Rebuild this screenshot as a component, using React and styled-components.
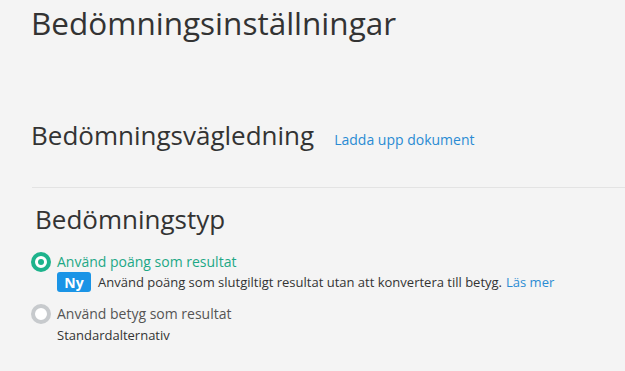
import React from "react";
import styled, { createGlobalStyle } from "styled-components";

const GlobalStyle = createGlobalStyle`
  html, body {
    margin: 0;
    padding: 0;
    background: #f4f4f4;
  }
  body {
    font-family: "Open Sans", "Liberation Sans", sans-serif;
    color: #333;
  }
`;

const Page = styled.div`
  min-height: 371px;
  padding: 7px 0 0 31px;
  background: #f4f4f4;
  overflow: hidden;
`;

const Title = styled.h1`
  margin: 0;
  font-size: 31.5px;
  line-height: 32px;
  font-weight: 400;
  color: #333;
  white-space: nowrap;
`;

const Section = styled.section`
  margin-top: ${(p) => p.$top}px;
  padding-left: ${(p) => p.$indent || 0}px;
`;

const HeadRow = styled.div`
  display: flex;
  align-items: baseline;
  gap: 20px;
`;

const Heading = styled.h2`
  margin: 0;
  font-size: 26px;
  line-height: 1;
  font-weight: 400;
  color: #333;
  white-space: nowrap;
`;

const Link = styled.a`
  font-size: 14px;
  color: #2a8bd3;
  text-decoration: none;
  cursor: pointer;
  white-space: nowrap;
`;

const Divider = styled.hr`
  margin: 38px 0 0 1px;
  border: 0;
  border-top: 1px solid #e3e3e3;
`;

const Options = styled.div`
  margin-top: 20px;
  margin-left: -4px;
  display: flex;
  flex-direction: column;
  gap: 12px;
`;

const Option = styled.label`
  display: grid;
  grid-template-columns: 20px 1fr;
  column-gap: 6px;
  cursor: pointer;
`;

const Radio = styled.span`
  box-sizing: border-box;
  width: 20px;
  height: 20px;
  border-radius: 50%;
  border: 4px solid ${(p) => (p.$checked ? "#1db38c" : "#c7cacd")};
  background: #fff;
  display: flex;
  align-items: center;
  justify-content: center;

  &::after {
    content: "";
    width: 6px;
    height: 6px;
    border-radius: 50%;
    background: ${(p) => (p.$checked ? "#1db38c" : "transparent")};
  }
`;

const Label = styled.span`
  font-size: 14px;
  line-height: 20px;
  color: ${(p) => (p.$checked ? "#1da886" : "#555")};
  white-space: nowrap;
`;

const Detail = styled.div`
  grid-column: 2;
  display: flex;
  align-items: center;
  gap: 7px;
  min-height: ${(p) => p.$h}px;
  font-size: 13px;
  color: #333;
  white-space: nowrap;
`;

const Badge = styled.span`
  display: inline-flex;
  align-items: center;
  justify-content: center;
  width: 34px;
  height: 20px;
  border-radius: 3px;
  background: #1a94e6;
  color: #fff;
  font-size: 14px;
  font-weight: 700;
`;

const SmallLink = styled(Link)`
  font-size: 13px;
  margin-left: 4px;
`;

export default function App() {
  return (
    <>
      <GlobalStyle />
      <Page>
        <Title>Bedömningsinställningar</Title>

        <Section $top={83}>
          <HeadRow>
            <Heading>Bedömningsvägledning</Heading>
            <Link>Ladda upp dokument</Link>
          </HeadRow>
        </Section>

        <Divider />

        <Section $top={18} $indent={4}>
          <Heading>Bedömningstyp</Heading>
          <Options>
            <Option>
              <Radio $checked />
              <Label $checked>Använd poäng som resultat</Label>
              <Detail $h={20}>
                <Badge>Ny</Badge>
                <span>
                  Använd poäng som slutgiltigt resultat utan att konvertera till betyg.
                  <SmallLink>Läs mer</SmallLink>
                </span>
              </Detail>
            </Option>
            <Option>
              <Radio />
              <Label>Använd betyg som resultat</Label>
              <Detail $h={22}>Standardalternativ</Detail>
            </Option>
          </Options>
        </Section>
      </Page>
    </>
  );
}
